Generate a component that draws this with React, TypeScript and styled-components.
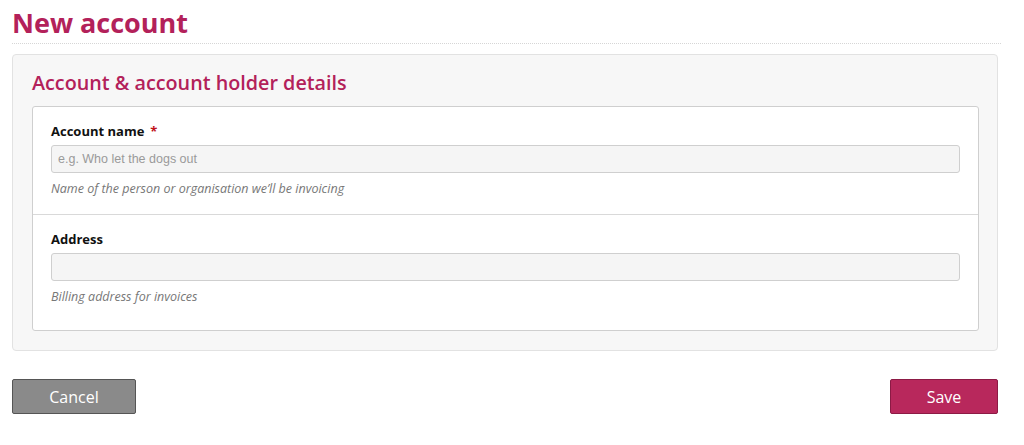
import React from "react";
import styled, { createGlobalStyle } from "styled-components";

const colors = {
  brand: "#b3215a",
  brandDark: "#8c1a45",
  label: "#111",
  help: "#777",
  panelBg: "#f7f7f7",
  panelBorder: "#e2e2e2",
  boxBorder: "#cfcfcf",
  inputBg: "#f5f5f5",
};

const GlobalStyle = createGlobalStyle`
  body {
    margin: 0;
    background: #fff;
    font-family: "Open Sans", "Liberation Sans", sans-serif;
  }
`;

const Page = styled.div`
  padding: 0 26px 0 12px;
`;

const PageTitle = styled.h1`
  margin: 0 -3px 0 0;
  padding: 4px 0 1px 0;
  font-size: 27px;
  font-weight: 700;
  line-height: 38px;
  color: ${colors.brand};
  border-bottom: 1px dotted #d6d6d6;
`;

const Panel = styled.section`
  margin-top: 10px;
  background: ${colors.panelBg};
  border: 1px solid ${colors.panelBorder};
  border-radius: 4px;
  padding: 14px 18px 19px 19px;
`;

const PanelTitle = styled.h2`
  margin: 0 0 9px 0;
  font-size: 19.75px;
  font-weight: 600;
  line-height: 28px;
  color: ${colors.brand};
`;

const FieldBox = styled.div`
  background: #fff;
  border: 1px solid ${colors.boxBorder};
  border-radius: 3px;
  padding-bottom: 8px;
`;

const Field = styled.div`
  padding: 15px 18px 16px 18px;

  & + & {
    border-top: 1px solid #d9d9d9;
  }
`;

const Label = styled.label`
  display: block;
  font-size: 13px;
  font-weight: 700;
  line-height: 18px;
  color: ${colors.label};
  margin-bottom: 5px;
`;

const Required = styled.span`
  color: #c0121b;
  margin-left: 6px;
`;

const Input = styled.input`
  display: block;
  box-sizing: border-box;
  width: 100%;
  height: 28px;
  padding: 0 6px;
  background: ${colors.inputBg};
  border: 1px solid ${colors.boxBorder};
  border-radius: 3px;
  font-family: "Liberation Sans", Arial, sans-serif;
  font-size: 12.5px;
  color: #333;

  &::placeholder {
    color: #9a9a9a;
  }
`;

const Help = styled.p`
  margin: 7px 0 0 0;
  font-size: 12.5px;
  font-style: italic;
  line-height: 18px;
  color: ${colors.help};
`;

const Actions = styled.div`
  display: flex;
  justify-content: space-between;
  margin-top: 28px;
`;

const Button = styled.button<{ $primary?: boolean }>`
  height: 35px;
  padding: 0;
  width: ${(p) => (p.$primary ? "108px" : "124px")};
  font-family: "Open Sans", "Liberation Sans", sans-serif;
  font-size: 16px;
  color: #fff;
  border-radius: 2px;
  background: ${(p) => (p.$primary ? "#b8285c" : "#8a8a8a")};
  border: 1px solid ${(p) => (p.$primary ? colors.brandDark : "#555")};
  cursor: pointer;
`;

const App = () => {
  return (
    <Page>
      <GlobalStyle />
      <PageTitle>New account</PageTitle>
      <Panel>
        <PanelTitle>Account &amp; account holder details</PanelTitle>
        <FieldBox>
          <Field>
            <Label>
              Account name<Required>*</Required>
            </Label>
            <Input placeholder="e.g. Who let the dogs out" />
            <Help>Name of the person or organisation we’ll be invoicing</Help>
          </Field>
          <Field>
            <Label>Address</Label>
            <Input />
            <Help>Billing address for invoices</Help>
          </Field>
        </FieldBox>
      </Panel>
      <Actions>
        <Button>Cancel</Button>
        <Button $primary>Save</Button>
      </Actions>
    </Page>
  );
};

export default App;
